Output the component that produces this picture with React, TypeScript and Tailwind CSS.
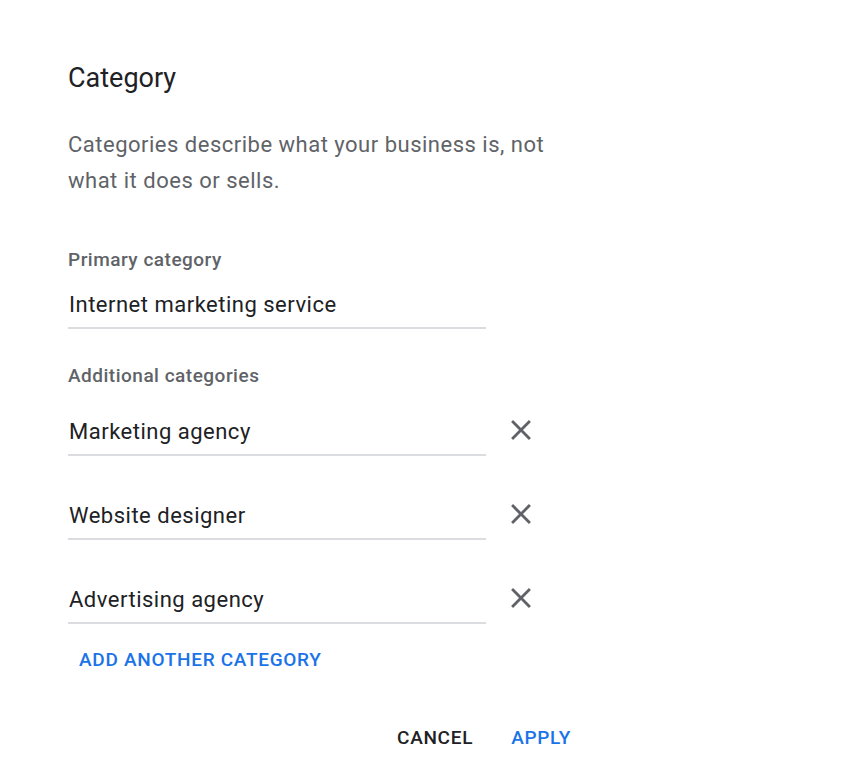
import React from "react";

const extras = ["Marketing agency", "Website designer", "Advertising agency"];

const CloseIcon = () => (
  <svg viewBox="0 0 24 24" className="w-[34px] h-[34px] fill-[#5f6368]">
    <path d="M19 6.41L17.59 5 12 10.59 6.41 5 5 6.41 10.59 12 5 17.59 6.41 19 12 13.41 17.59 19 19 17.59 13.41 12z" />
  </svg>
);

export default function App() {
  return (
    <div className="min-h-screen bg-white font-['Roboto',sans-serif] pl-[68px] pt-[60px]">
      <h1 className="text-[27px] leading-[36px] text-[#202124] font-normal">Category</h1>
      <p className="mt-[31px] w-[490px] text-[22px] leading-[36px] tracking-[0.5px] text-[#5f6368]">
        Categories describe what your business is, not what it does or sells.
      </p>

      <div className="mt-[49px] text-[19px] leading-[24px] tracking-[0.5px] font-medium text-[#5f6368]">Primary category</div>
      <div className="mt-[19px] w-[418px] border-b-2 border-[#dadce0] pb-[8px] pl-[1px] text-[22px] leading-[28px] tracking-[0.5px] text-[#202124]">
        Internet marketing service
      </div>

      <div className="mt-[35px] text-[19px] leading-[24px] tracking-[0.5px] font-medium text-[#5f6368]">Additional categories</div>
      <div className="mt-[30px] flex flex-col gap-[46px]">
        {extras.map((name) => (
          <div key={name} className="flex items-start">
            <div className="w-[418px] border-b-2 border-[#dadce0] pb-[8px] pl-[1px] text-[22px] leading-[28px] tracking-[0.5px] text-[#202124]">
              {name}
            </div>
            <button className="ml-[18px] -mt-[5px]">
              <CloseIcon />
            </button>
          </div>
        ))}
      </div>

      <button className="mt-[24px] ml-[11px] block text-[19px] leading-[24px] tracking-[0.7px] font-medium text-[#1a73e8] uppercase">
        Add another category
      </button>

      <div className="mt-[54px] w-[503px] flex justify-end gap-[38px] text-[19px] leading-[24px] font-medium">
        <button className="uppercase tracking-[0.7px] text-[#202124]">Cancel</button>
        <button className="uppercase tracking-[0.7px] text-[#1a73e8]">Apply</button>
      </div>
    </div>
  );
}
